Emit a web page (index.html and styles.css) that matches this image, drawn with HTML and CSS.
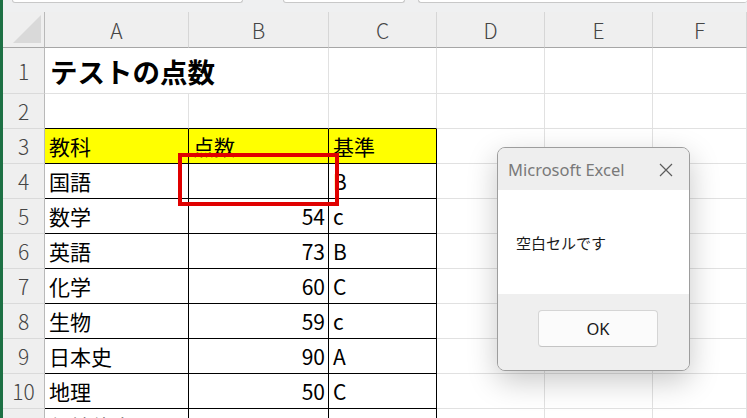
FILE: index.html
```html
<!DOCTYPE html>
<html lang="ja">
<head>
    <meta charset="UTF-8">
    <meta name="viewport" content="width=device-width, initial-scale=1.0">
    <title>テストの点数 - Excel</title>
    <link rel="stylesheet" href="styles.css">
</head>
<body>

    <div class="app">
        <div class="edge"></div>

        <div class="main">
            <div class="topbar">
                <div class="box box-name"></div>
                <div class="box box-fx"></div>
                <div class="box box-formula"></div>
            </div>

            <div class="sheet">
                <!-- 見出し行 -->
                <div class="corner">
                    <svg width="28" height="28" viewBox="0 0 28 28"><polygon points="28,0 28,28 0,28" fill="#d9d9d9"/></svg>
                </div>
                <div class="colhead">A</div>
                <div class="colhead">B</div>
                <div class="colhead">C</div>
                <div class="colhead">D</div>
                <div class="colhead">E</div>
                <div class="colhead">F</div>

                <!-- 1 -->
                <div class="rowhead">1</div>
                <div class="cell title span2">テストの点数</div>
                <div class="cell"></div>
                <div class="cell"></div>
                <div class="cell"></div>
                <div class="cell"></div>

                <!-- 2 -->
                <div class="rowhead">2</div>
                <div class="cell under"></div>
                <div class="cell under"></div>
                <div class="cell under"></div>
                <div class="cell"></div>
                <div class="cell"></div>
                <div class="cell"></div>

                <!-- 3 -->
                <div class="rowhead">3</div>
                <div class="cell box-line head">教科</div>
                <div class="cell box-line head">点数</div>
                <div class="cell box-line head">基準</div>
                <div class="cell"></div>
                <div class="cell"></div>
                <div class="cell"></div>

                <!-- 4 -->
                <div class="rowhead">4</div>
                <div class="cell box-line">国語</div>
                <div class="cell box-line num"></div>
                <div class="cell box-line">B</div>
                <div class="cell"></div>
                <div class="cell"></div>
                <div class="cell"></div>

                <!-- 5 -->
                <div class="rowhead">5</div>
                <div class="cell box-line">数学</div>
                <div class="cell box-line num">54</div>
                <div class="cell box-line">c</div>
                <div class="cell"></div>
                <div class="cell"></div>
                <div class="cell"></div>

                <!-- 6 -->
                <div class="rowhead">6</div>
                <div class="cell box-line">英語</div>
                <div class="cell box-line num">73</div>
                <div class="cell box-line">B</div>
                <div class="cell"></div>
                <div class="cell"></div>
                <div class="cell"></div>

                <!-- 7 -->
                <div class="rowhead">7</div>
                <div class="cell box-line">化学</div>
                <div class="cell box-line num">60</div>
                <div class="cell box-line">C</div>
                <div class="cell"></div>
                <div class="cell"></div>
                <div class="cell"></div>

                <!-- 8 -->
                <div class="rowhead">8</div>
                <div class="cell box-line">生物</div>
                <div class="cell box-line num">59</div>
                <div class="cell box-line">c</div>
                <div class="cell"></div>
                <div class="cell"></div>
                <div class="cell"></div>

                <!-- 9 -->
                <div class="rowhead">9</div>
                <div class="cell box-line">日本史</div>
                <div class="cell box-line num">90</div>
                <div class="cell box-line">A</div>
                <div class="cell"></div>
                <div class="cell"></div>
                <div class="cell"></div>

                <!-- 10 -->
                <div class="rowhead">10</div>
                <div class="cell box-line">地理</div>
                <div class="cell box-line num">50</div>
                <div class="cell box-line">C</div>
                <div class="cell"></div>
                <div class="cell"></div>
                <div class="cell"></div>

                <!-- 11 -->
                <div class="rowhead">11</div>
                <div class="cell box-line">保健体育</div>
                <div class="cell box-line num">78</div>
                <div class="cell box-line">B</div>
                <div class="cell"></div>
                <div class="cell"></div>
                <div class="cell"></div>
            </div>

            <!-- 空白セルの強調枠 -->
            <div class="mark"></div>

            <!-- メッセージボックス -->
            <div class="dialog">
                <div class="dialog-title">
                    <span>Microsoft Excel</span>
                    <svg class="close" width="14" height="14" viewBox="0 0 14 14">
                        <path d="M1 1 L13 13 M13 1 L1 13" stroke="#5c5c5c" stroke-width="1.2" fill="none"/>
                    </svg>
                </div>
                <div class="dialog-body">空白セルです</div>
                <div class="dialog-foot">
                    <button class="ok">OK</button>
                </div>
            </div>
        </div>
    </div>

</body>
</html>
```

FILE: styles.css
```css
* {
    margin: 0;
    padding: 0;
    box-sizing: border-box;
}

body {
    font-family: 'Noto Sans CJK JP', 'Noto Sans', sans-serif;
    background-color: #ffffff;
    width: 747px;
    height: 418px;
    overflow: hidden;
}

.app {
    display: flex;
    height: 418px;
}

/* 左端の緑の線 */
.edge {
    width: 3px;
    background: #1d7044;
}

.main {
    flex: 1;
    position: relative;
    overflow: hidden;
}

/* 数式バーの下端 */
.topbar {
    height: 12px;
    background: #eff0f1;
    display: flex;
    padding-left: 9px;
}

.box {
    height: 3px;
    background: #ffffff;
    border: 1px solid #c8c8c8;
    border-top: none;
    border-radius: 0 0 4px 4px;
}

.box-name {
    width: 231px;
    margin-right: 40px;
}

.box-fx {
    width: 122px;
    margin-right: 13px;
}

.box-formula {
    flex: 1;
    border-right: none;
}

/* シート */
.sheet {
    display: grid;
    grid-template-columns: 42px 144px 140px 108px 108px 108px 1fr;
    grid-template-rows: 36px 46px repeat(10, 35px);
}

.corner {
    background: #efefef;
    border-right: 1px solid #b9b9b9;
    border-bottom: 1px solid #a6a6a6;
    display: flex;
    align-items: flex-start;
    justify-content: flex-end;
    padding: 3px 3px 0 0;
}

.colhead {
    background: #efefef;
    border-right: 1px solid #d6d6d6;
    border-bottom: 1px solid #a6a6a6;
    color: #454545;
    font-size: 21px;
    font-weight: 300;
    display: flex;
    align-items: center;
    justify-content: center;
}

.rowhead {
    background: #efefef;
    border-right: 1px solid #b9b9b9;
    border-bottom: 1px solid #dadada;
    color: #454545;
    font-size: 21px;
    font-weight: 300;
    display: flex;
    align-items: center;
    justify-content: center;
}

.cell {
    border-right: 1px solid #e1e1e1;
    border-bottom: 1px solid #e1e1e1;
    font-size: 21px;
    color: #000000;
    padding: 0 4px;
    display: flex;
    align-items: center;
    white-space: nowrap;
}

.span2 {
    grid-column: span 2;
}

.title {
    font-size: 27.5px;
    font-weight: bold;
    padding-left: 5px;
}

/* 表の罫線 */
.under {
    border-bottom-color: #000000;
}

.box-line {
    border-right-color: #000000;
    border-bottom-color: #000000;
}

.head {
    background: #ffff00;
}

.num {
    justify-content: flex-end;
    padding-right: 3px;
}

/* 赤枠 */
.mark {
    position: absolute;
    left: 175px;
    top: 153px;
    width: 161px;
    height: 53px;
    border: 4px solid #e00000;
}

/* メッセージボックス */
.dialog {
    position: absolute;
    left: 494px;
    top: 147px;
    width: 193px;
    height: 224px;
    border: 1px solid #9d9d9d;
    border-radius: 8px;
    overflow: hidden;
    background: #efefef;
    box-shadow: 0 10px 30px rgba(0, 0, 0, 0.22);
    display: flex;
    flex-direction: column;
}

.dialog-title {
    height: 42px;
    background: #eeeeee;
    display: flex;
    align-items: center;
    justify-content: space-between;
    padding: 0 16px 0 10px;
    font-family: 'Noto Sans', sans-serif;
    font-size: 16.5px;
    color: #797979;
}

.close {
    margin-top: 1px;
}

.dialog-body {
    height: 104px;
    background: #ffffff;
    display: flex;
    align-items: center;
    padding-left: 18px;
    font-size: 15px;
    color: #1a1a1a;
}

.dialog-foot {
    flex: 1;
    background: #efefef;
    padding: 16px 0 0 40px;
}

.ok {
    width: 120px;
    height: 37px;
    background: #fbfbfb;
    border: 1px solid #d5d5d5;
    border-bottom-color: #c4c4c4;
    border-radius: 4px;
    font-family: 'Noto Sans', sans-serif;
    font-size: 16.5px;
    color: #1a1a1a;
}
```
